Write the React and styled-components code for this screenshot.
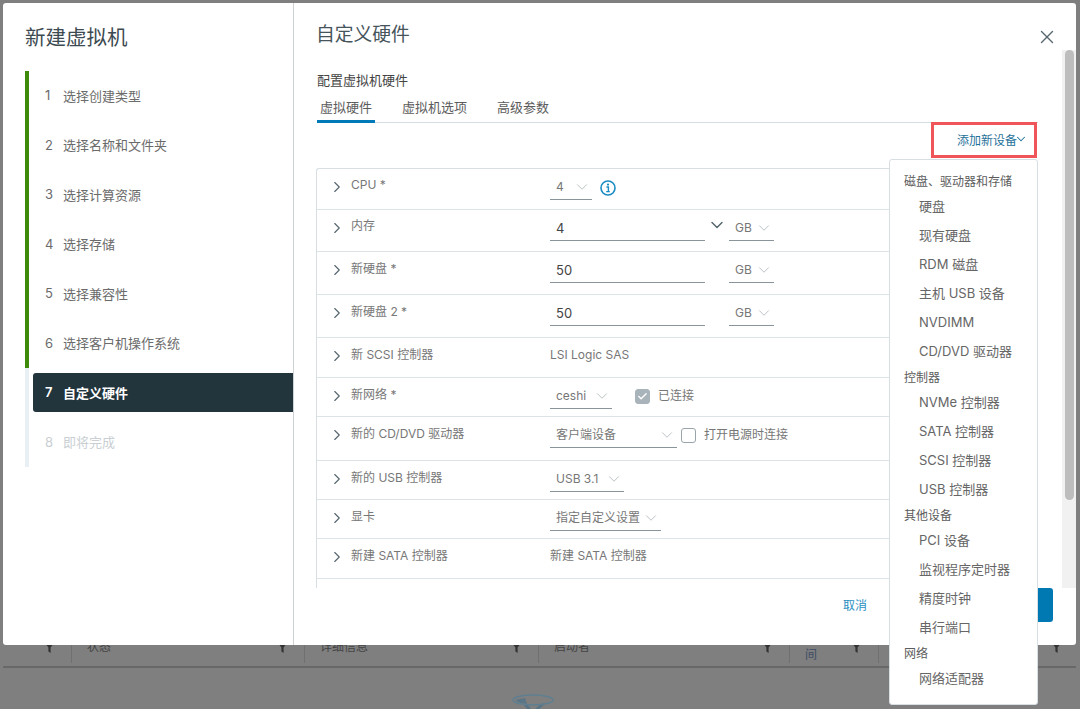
import React from "react";
import styled, { createGlobalStyle } from "styled-components";
import { ChevronDown, ChevronRight, Check, X } from "lucide-react";

const GlobalStyle = createGlobalStyle`
  html, body {
    margin: 0;
    height: 100%;
    overflow: hidden;
    background: #7f7f7f;
  }
  body {
    font-family: Inter, "Noto Sans CJK SC", sans-serif;
    font-size: 13px;
    color: #666;
  }
`;

const Page = styled.div`
  height: 709px;
  padding: 3px 4px 0 3px;
  box-sizing: border-box;
  overflow: hidden;
`;

const Modal = styled.div`
  position: relative;
  z-index: 1;
  height: 642px;
  display: flex;
  background: #fff;
  border-radius: 3px;
`;

const Sidebar = styled.aside`
  width: 291px;
  flex: none;
  padding: 22px 0 0 22px;
  box-sizing: border-box;
  border-right: 1px solid #ccd1d4;
`;

const WizardTitle = styled.h1`
  margin: 0 0 20px;
  font-size: 20.5px;
  line-height: 26px;
  font-weight: 400;
  color: #3d4a51;
`;

const Step = styled.div`
  height: 49.5px;
  display: flex;
  align-items: center;
  border-left: 4px solid ${(p) => (p.$state === "done" ? "#3f8a0a" : "#e9f0f3")};
`;

const StepBody = styled.div`
  flex: 1;
  height: 39px;
  box-sizing: border-box;
  display: flex;
  align-items: center;
  padding-bottom: 1px;
  padding-left: ${(p) => (p.$state === "active" ? "12px" : "16px")};
  margin-left: ${(p) => (p.$state === "active" ? "4px" : "0")};
  border-radius: 3px 0 0 3px;
  background: ${(p) => (p.$state === "active" ? "#22343c" : "transparent")};
  color: ${(p) =>
    p.$state === "active" ? "#fff" : p.$state === "todo" ? "#c9cfd3" : "#6b6b6b"};
  font-weight: ${(p) => (p.$state === "active" ? 600 : 400)};
`;

const StepNum = styled.span`
  width: 18px;
  flex: none;
`;

const Main = styled.section`
  flex: 1;
  min-width: 0;
  display: flex;
  flex-direction: column;
`;

const Header = styled.header`
  height: 47px;
  flex: none;
  display: flex;
  justify-content: space-between;
  padding: 18px 18px 0 22px;
  box-sizing: border-box;
`;

const StepTitle = styled.h2`
  margin: 2px 0 0;
  font-size: 18.8px;
  line-height: 24px;
  font-weight: 400;
  color: #46545b;
`;

const CloseIcon = styled(X)`
  margin-top: 5px;
  color: #56666e;
`;

const Middle = styled.div`
  height: 538px;
  flex: none;
  display: flex;
`;

const Body = styled.div`
  width: 768px;
  flex: none;
  padding: 20px 24px 0 23px;
  box-sizing: border-box;
`;

const SubTitle = styled.div`
  line-height: 20px;
  margin-bottom: 7px;
  color: #444;
`;

const Tabs = styled.nav`
  height: 26px;
  display: flex;
  gap: 24px;
  border-bottom: 1px solid #d5dde1;
  box-sizing: border-box;
`;

const Tab = styled.div`
  height: 26px;
  padding: 0 3px;
  box-sizing: border-box;
  line-height: 20px;
  color: #5c5c5c;
  border-bottom: 3px solid ${(p) => (p.$active ? "#0079b8" : "transparent")};
`;

const AddBar = styled.div`
  display: flex;
  justify-content: flex-end;
  margin: -1px 1px 10px 0;
`;

const AddWrap = styled.div`
  position: relative;
`;

const AddButton = styled.div`
  width: 106px;
  height: 36px;
  box-sizing: border-box;
  border: 3.5px solid #f0555a;
  display: flex;
  align-items: center;
  justify-content: flex-end;
  padding: 0 6px 2px 0;
  font-size: 12px;
  color: #1f7199;

  svg {
    margin-left: -3px;
  }
`;

const Menu = styled.div`
  position: absolute;
  top: calc(100% + 1px);
  right: -1px;
  width: 149px;
  height: 546px;
  padding-top: 11px;
  box-sizing: border-box;
  background: #fff;
  border: 1px solid #d7dfe3;
  border-radius: 3px;
  z-index: 2;
`;

const MenuHead = styled.div`
  height: 22px;
  line-height: 22px;
  padding-left: 14px;
  font-size: 12px;
  color: #5c5c5c;
`;

const MenuItem = styled.div`
  height: 29px;
  line-height: 27px;
  padding-left: 29px;
  color: #666;
`;

const Table = styled.div`
  height: 420px;
  border-left: 1.5px solid #d7dfe3;
  border-top: 1.5px solid #d7dfe3;
  border-radius: 3px 0 0 0;
  box-sizing: border-box;
  margin-left: -1px;
`;

const Row = styled.div`
  height: ${(p) => p.$h}px;
  box-sizing: border-box;
  display: grid;
  grid-template-columns: 34px 199px 1fr;
  padding-top: 7px;
  border-bottom: 1.5px solid #dde4e8;
  font-size: 12px;
`;

const Caret = styled(ChevronRight)`
  margin: 2px 0 0 11px;
  color: #56666e;
`;

const RowLabel = styled.div`
  margin-top: ${(p) => -p.$up}px;
  line-height: 20px;
  color: #777;
`;

const PlainValue = styled.div`
  line-height: 20px;
  color: #777;
`;

const Controls = styled.div`
  display: flex;
  align-items: flex-start;
`;

const Select = styled.div`
  width: ${(p) => p.$w}px;
  height: 24px;
  box-sizing: border-box;
  padding: 0 1px 1px 6px;
  display: flex;
  align-items: center;
  justify-content: space-between;
  line-height: 20px;
  color: #777;
  border-bottom: 1px solid #8a959b;
`;

const InputBox = styled(Select)`
  font-size: 13px;
  color: #444;
`;

const ThinChevron = styled(ChevronDown)`
  flex: none;
  color: #a3adb2;
`;

const ComboSlot = styled.div`
  width: 24px;
  height: 20px;
  flex: none;
  display: flex;
  justify-content: center;
  color: #56666e;

  svg {
    margin-top: -2px;
  }
`;

const InfoMark = styled.svg`
  margin: 4px 0 0 8px;
  color: #1a8cc4;
`;

const Box = styled.span`
  width: 15px;
  height: 15px;
  margin: 4px 8px 0 ${(p) => p.$ml}px;
  box-sizing: border-box;
  flex: none;
  display: flex;
  align-items: center;
  justify-content: center;
  border-radius: 3px;
  border: 1px solid ${(p) => (p.$on ? "#a9b4ba" : "#9aa5ab")};
  background: ${(p) => (p.$on ? "#a9b4ba" : "#fff")};
  color: #fff;
`;

const BoxLabel = styled.span`
  line-height: 22px;
  color: #777;
`;

const Scrollbar = styled.div`
  width: 14px;
  flex: none;
  background: #f1f1f1;
  display: flex;
  justify-content: center;
`;

const Thumb = styled.div`
  width: 9px;
  height: 450px;
  background: #bdbdbd;
  border-radius: 5px;
`;

const Footer = styled.footer`
  display: flex;
  justify-content: flex-end;
  padding-right: 23px;
  gap: 106px;
`;

const LinkButton = styled.div`
  height: 34px;
  line-height: 36px;
  font-size: 12px;
  color: #2a8fc0;
`;

const PrimaryButton = styled.div`
  width: 80px;
  height: 34px;
  line-height: 34px;
  text-align: center;
  font-size: 12px;
  color: #fff;
  background: #0079b2;
  border-radius: 3px;
`;

const BackHead = styled.div`
  height: 33px;
  margin-top: -10px;
  padding-bottom: 3px;
  box-sizing: border-box;
  display: grid;
  grid-template-columns: 69px 233px 234px 251px 89px 1fr;
  border-bottom: 2px solid #686868;
`;

const BackCell = styled.div`
  display: flex;
  align-items: flex-end;
  justify-content: space-between;
  padding: 0 ${(p) => p.$pr || 17}px 8px 15px;
  border-right: ${(p) => (p.$last ? "none" : "1px solid #707070")};
  font-size: 12px;
  line-height: 16px;
  color: #444;
  white-space: nowrap;

  svg {
    margin-bottom: 2px;
  }
`;

const WrappedHead = styled.span`
  margin-bottom: -8px;
  color: #3f4d66;
`;

const FunnelWrap = styled.div`
  padding: 26px 0 0 509px;
`;

const steps = [
  ["1", "选择创建类型", "done"],
  ["2", "选择名称和文件夹", "done"],
  ["3", "选择计算资源", "done"],
  ["4", "选择存储", "done"],
  ["5", "选择兼容性", "done"],
  ["6", "选择客户机操作系统", "done"],
  ["7", "自定义硬件", "active"],
  ["8", "即将完成", "todo"],
];

const menu = [
  ["磁盘、驱动器和存储", ["硬盘", "现有硬盘", "RDM 磁盘", "主机 USB 设备", "NVDIMM", "CD/DVD 驱动器"]],
  ["控制器", ["NVMe 控制器", "SATA 控制器", "SCSI 控制器", "USB 控制器"]],
  ["其他设备", ["PCI 设备", "监视程序定时器", "精度时钟", "串行端口"]],
  ["网络", ["网络适配器"]],
];

function Filter() {
  return (
    <svg width="9" height="10" viewBox="0 0 9 10">
      <path d="M0 0h9L5.6 4.4V10L3.4 8.6V4.4z" fill="#333" />
    </svg>
  );
}

function InfoBadge() {
  return (
    <InfoMark width="16" height="16" viewBox="0 0 16 16" fill="none">
      <circle cx="8" cy="8" r="7" stroke="currentColor" strokeWidth="1.6" />
      <circle cx="8" cy="4.6" r="1.1" fill="currentColor" />
      <path
        d="M6.4 7h2v4.4M6.2 11.6h3.6"
        stroke="currentColor"
        strokeWidth="1.4"
      />
    </InfoMark>
  );
}

function Dropdown({ w, value }) {
  return (
    <Select $w={w}>
      {value}
      <ThinChevron size={18} strokeWidth={1} />
    </Select>
  );
}

function HardwareRow({ h, up = 0, label, children }) {
  return (
    <Row $h={h}>
      <Caret size={18} strokeWidth={1.5} />
      <RowLabel $up={up}>{label}</RowLabel>
      {children}
    </Row>
  );
}

export default function App() {
  return (
    <Page>
      <GlobalStyle />
      <Modal>
        <Sidebar>
          <WizardTitle>新建虚拟机</WizardTitle>
          {steps.map(([n, text, state]) => (
            <Step key={n} $state={state}>
              <StepBody $state={state}>
                <StepNum>{n}</StepNum>
                {text}
              </StepBody>
            </Step>
          ))}
        </Sidebar>
        <Main>
          <Header>
            <StepTitle>自定义硬件</StepTitle>
            <CloseIcon size={22} strokeWidth={1.5} />
          </Header>
          <Middle>
            <Body>
              <SubTitle>配置虚拟机硬件</SubTitle>
              <Tabs>
                <Tab $active>虚拟硬件</Tab>
                <Tab>虚拟机选项</Tab>
                <Tab>高级参数</Tab>
              </Tabs>
              <AddBar>
                <AddWrap>
                  <AddButton>
                    添加新设备
                    <ChevronDown size={14} strokeWidth={1.75} />
                  </AddButton>
                  <Menu>
                    {menu.map(([head, items]) => (
                      <div key={head}>
                        <MenuHead>{head}</MenuHead>
                        {items.map((item) => (
                          <MenuItem key={item}>{item}</MenuItem>
                        ))}
                      </div>
                    ))}
                  </Menu>
                </AddWrap>
              </AddBar>
              <Table>
                <HardwareRow h={41} up={1} label="CPU *">
                  <Controls>
                    <Dropdown w={42} value="4" />
                    <InfoBadge />
                  </Controls>
                </HardwareRow>
                <HardwareRow h={42} up={1} label="内存">
                  <Controls>
                    <InputBox $w={155}>4</InputBox>
                    <ComboSlot>
                      <ChevronDown size={20} strokeWidth={1.75} />
                    </ComboSlot>
                    <Dropdown w={45} value="GB" />
                  </Controls>
                </HardwareRow>
                <HardwareRow h={43} label="新硬盘 *">
                  <Controls>
                    <InputBox $w={155}>50</InputBox>
                    <ComboSlot />
                    <Dropdown w={45} value="GB" />
                  </Controls>
                </HardwareRow>
                <HardwareRow h={43} label="新硬盘 2 *">
                  <Controls>
                    <InputBox $w={155}>50</InputBox>
                    <ComboSlot />
                    <Dropdown w={45} value="GB" />
                  </Controls>
                </HardwareRow>
                <HardwareRow h={40} label="新 SCSI 控制器">
                  <PlainValue>LSI Logic SAS</PlainValue>
                </HardwareRow>
                <HardwareRow h={39} label="新网络 *">
                  <Controls>
                    <Dropdown w={62} value="ceshi" />
                    <Box $on $ml={23}>
                      <Check size={11} strokeWidth={3} />
                    </Box>
                    <BoxLabel>已连接</BoxLabel>
                  </Controls>
                </HardwareRow>
                <HardwareRow h={44} label="新的 CD/DVD 驱动器">
                  <Controls>
                    <Dropdown w={127} value="客户端设备" />
                    <Box $ml={4} />
                    <BoxLabel>打开电源时连接</BoxLabel>
                  </Controls>
                </HardwareRow>
                <HardwareRow h={39} label="新的 USB 控制器">
                  <Controls>
                    <Dropdown w={74} value="USB 3.1" />
                  </Controls>
                </HardwareRow>
                <HardwareRow h={39} label="显卡">
                  <Controls>
                    <Dropdown w={111} value="指定自定义设置" />
                  </Controls>
                </HardwareRow>
                <HardwareRow h={40} label="新建 SATA 控制器">
                  <PlainValue>新建 SATA 控制器</PlainValue>
                </HardwareRow>
              </Table>
            </Body>
            <Scrollbar>
              <Thumb />
            </Scrollbar>
          </Middle>
          <Footer>
            <LinkButton>取消</LinkButton>
            <PrimaryButton>下一页</PrimaryButton>
          </Footer>
        </Main>
      </Modal>
      <BackHead>
        <BackCell>
          <span />
          <Filter />
        </BackCell>
        <BackCell>
          状态
          <Filter />
        </BackCell>
        <BackCell>
          详细信息
          <Filter />
        </BackCell>
        <BackCell>
          启动者
          <Filter />
        </BackCell>
        <BackCell>
          <WrappedHead>间</WrappedHead>
          <Filter />
        </BackCell>
        <BackCell $last $pr={15}>
          <span />
          <Filter />
        </BackCell>
      </BackHead>
      <FunnelWrap>
        <svg width="42" height="30" viewBox="0 0 42 30" fill="none">
          <path d="M3 6 L13 4 L15 10 Q8 10 3 6z" fill="#5a7686" />
          <path d="M11 10 L16 16 H20 L15 10z" fill="#587484" />
          <path d="M29 10 L34 9 L26 16 H22z" fill="#587484" />
          <ellipse cx="21" cy="6" rx="20" ry="5" stroke="#5f7f90" strokeWidth="1.5" />
        </svg>
      </FunnelWrap>
    </Page>
  );
}
